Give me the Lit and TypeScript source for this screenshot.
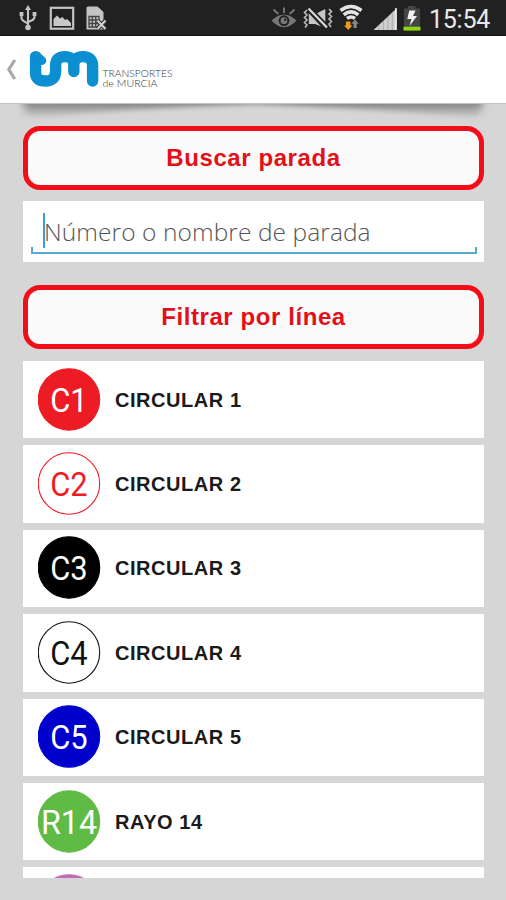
import { LitElement, html, css, svg } from "lit";
import { customElement, property } from "lit/decorators.js";

interface Line {
  code: string;
  name: string;
  fill: string;
  ink: string;
  ring: string;
}

const LINES: Line[] = [
  { code: "C1", name: "CIRCULAR 1", fill: "#ed1c24", ink: "#fff", ring: "#ed1c24" },
  { code: "C2", name: "CIRCULAR 2", fill: "#fff", ink: "#ed1c24", ring: "#ed1c24" },
  { code: "C3", name: "CIRCULAR 3", fill: "#000", ink: "#fff", ring: "#000" },
  { code: "C4", name: "CIRCULAR 4", fill: "#fff", ink: "#111", ring: "#111" },
  { code: "C5", name: "CIRCULAR 5", fill: "#0000cd", ink: "#fff", ring: "#0000cd" },
  { code: "R14", name: "RAYO 14", fill: "#5fbb46", ink: "#fff", ring: "#5fbb46" },
  { code: "", name: "", fill: "#c06fb4", ink: "#fff", ring: "#c06fb4" },
];

@customElement("status-bar")
export class StatusBar extends LitElement {
  static styles = css`
    :host { display: flex; justify-content: space-between; height: 36px; box-sizing: border-box;
      background: #212121; border-bottom: 1px solid #111; }
    svg { display: block; }
    .right { display: flex; }
    .clock { font: 400 25px/39px Roboto, sans-serif; color: #e9e9e9; width: 77px; height: 35px;
      letter-spacing: -0.250px; }
  `;
  render() {
    return html`
      <svg width="120" height="35" viewBox="0 0 120 35">
        <g stroke="#c4c4c4" fill="none" stroke-width="2.100">
          <path d="M28 9V27M21.500 13V18Q21.500 20.500 28 23.500M34.500 13V17Q34.500 20 28 22" />
        </g>
        <path d="M28 5L31 10H25ZM19.600 12H23.400V16H19.600ZM32.600 12H36.400V16H32.600Z" fill="#c4c4c4" />
        <circle cx="28" cy="27.500" r="2.800" fill="#c4c4c4" />
        <rect x="50.800" y="7.800" width="22.400" height="20.900" fill="none" stroke="#c4c4c4" stroke-width="2.200" />
        <path d="M53.500 26V19L57 15.500L60 18.500L62.500 17L65 20L67 19L71 23V26Z" fill="#c8c8c8" />
        <path d="M88 6.500H97.500L103.500 12V29.500H86.500V8Q86.500 6.500 88 6.500Z" fill="#c4c4c4" />
        <path d="M89 16.500H99V27H89ZM89 20H99M89 23.500H99M92.300 16.500V27M95.700 16.500V27" fill="none" stroke="#444" stroke-width="1.300" />
        <path d="M97.500 20.500L105.500 29M105.500 20.500L97.500 29" stroke="#333" stroke-width="4.200" />
        <path d="M97.500 20.500L105.500 29M105.500 20.500L97.500 29" stroke="#d2d2d2" stroke-width="2" />
      </svg>
      <div class="right">
        <svg width="159" height="35" viewBox="270 0 159 35">
          <path d="M271.500 20.500Q284 8.500 296.500 20.500Q284 34 271.500 20.500Z" fill="#777" />
          <path d="M284 13V7.500M278.500 14L273.500 9.500M289.500 14L294.500 9.500" stroke="#777" stroke-width="1.900" />
          <circle cx="284" cy="20.700" r="4.400" fill="none" stroke="#212121" stroke-width="2" />
          <circle cx="285.200" cy="19.800" r="1.200" fill="#212121" />
          <path d="M308.800 11.500V24H315L325.300 28V9L316.500 13.500Z" fill="#c6c6c6" />
          <path d="M310 8L328 26.500M307 9L324.500 28" stroke="#212121" stroke-width="3" />
          <path d="M308.500 8.500L327 27.500" stroke="#d8d8d8" stroke-width="2.200" />
          <path d="M307 10L304.500 12.500L307 15L304.500 17.500L307 20L304.500 22.500L307 25L305 27.500M329 9L331.500 11.500L329 14L331.500 16.500L329 19L331.500 21.500L329 24L331 27" fill="none" stroke="#bdbdbd" stroke-width="1.600" />
          <g fill="none" stroke="#e4e4e4" stroke-width="3.500">
            <path d="M340.500 10.500Q351 2.500 361.500 10.500" />
            <path d="M343.700 14.800Q351 9 358.300 14.800" />
            <path d="M347 18.500Q351 15.500 355 18.500" />
          </g>
          <path d="M346 21.500H350.500V25.500H352.500L348.200 30L344 25.500H346Z" fill="#f09a24" />
          <path d="M353.500 28V23.800H351.300L355 19.500L358.700 23.800H356.700V28Z" fill="#888" />
          <path d="M373.500 30L396.500 8.500V30Z" fill="#cfcfcf" />
          <path d="M379 25V30M383.500 21V30M388 17V30M392.300 13V30" stroke="#a8a8a8" stroke-width="0.900" />
          <path d="M396 8V30" stroke="#eee" stroke-width="1.600" />
          <path d="M404 8.500H408V6H415.500V8.500H420V27H404Z" fill="#454545" />
          <rect x="403.500" y="26.700" width="17" height="3.900" fill="#90d510" />
          <path d="M409.300 10.500H415.500L413 16H417L409.500 26L411.500 19H407.300Z" fill="#f2f2f2" />
        </svg>
        <div class="clock">15:54</div>
      </div>
    `;
  }
}

@customElement("brand-header")
export class BrandHeader extends LitElement {
  static styles = css`
    :host { display: block; height: 67px; background: #fff; }
    svg { display: block; }
    text { font-family: Lato, sans-serif; font-weight: 300; fill: #333; }
  `;
  render() {
    return html`<svg width="506" height="67" viewBox="0 36 506 67">
      <path d="M14.800 60L8.800 69.500L14.800 79" fill="none" stroke="#a8a8a8" stroke-width="3.200" />
      <g fill="none" stroke="#0b8fd0" stroke-linecap="round" stroke-linejoin="round">
        <path stroke-width="11.400" d="M35.600 56.600V73Q35.600 81 45.500 81Q55.600 81 55.600 71V65.500Q55.600 56.600 64.800 56.600Q73.500 56.600 73.800 65V71.500V65Q74 56.600 83 56.600Q92.600 56.600 92.600 66V81" />
        <path stroke-width="8.500" d="M37 56L42 60.700" />
      </g>
      <text x="102.500" y="76.600" font-size="10.500" textLength="70" lengthAdjust="spacingAndGlyphs">TRANSPORTES</text>
      <text x="102.500" y="87" font-size="10.500" textLength="55" lengthAdjust="spacingAndGlyphs">de MURCIA</text>
    </svg>`;
  }
}

@customElement("line-row")
export class LineRow extends LitElement {
  @property({ attribute: false }) line!: Line;
  static styles = css`
    :host { display: flex; align-items: center; gap: 14px; height: 77.400px; flex: none; padding-left: 15px;
      box-sizing: border-box; background: #fff; }
    svg { display: block; flex: none; }
    .code { font: 400 32.500px Roboto, sans-serif; }
    .name { font: 700 20px/24px "Liberation Sans", sans-serif; letter-spacing: 0.550px; color: #1a1a1a; }
  `;
  render() {
    const l = this.line;
    const width = l.code.length === 3 ? 56 : 37.5;
    return html`
      <svg width="63" height="64" viewBox="0 0 63 64">
        <circle cx="31" cy="31.500" r="30.700" fill=${l.fill} stroke=${l.ring} stroke-width="1.100" />
        ${l.code
          ? svg`<text class="code" x="31" y="44.200" text-anchor="middle" textLength=${width}
              lengthAdjust="spacingAndGlyphs" fill=${l.ink}>${l.code}</text>`
          : null}
      </svg>
      <div class="name">${l.name}</div>
    `;
  }
}

@customElement("app-root")
export class AppRoot extends LitElement {
  static styles = css`
    :host { display: flex; flex-direction: column; height: 900px; overflow: hidden; background: #d6d6d6; }
    .shade { display: block; flex: none; height: 23px; }
    .body { display: flex; flex-direction: column; padding: 0 22px 0 23px; }
    .title { box-sizing: border-box; height: 64px; border: 5px solid #f20d18; border-radius: 17px;
      background: #fafafa; color: #e31019; text-align: center; letter-spacing: 0.580px;
      font: 700 24px/53px "Liberation Sans", sans-serif; }
    .field { box-sizing: border-box; height: 61px; margin: 11.400px 0 23.100px; padding: 12px 7px 7px;
      background: #fff; display: flex; flex-direction: column; }
    .entry { display: flex; align-items: center; height: 35px; padding-left: 12.500px; }
    .caret { width: 2px; height: 35px; background: #3a9be0; flex: none; }
    .hint { font: 300 24.500px/38px "Open Sans", "Noto Sans", sans-serif; color: #555; white-space: nowrap;
      letter-spacing: 0.080px; padding-top: 2px; margin-left: -0.500px; }
    .underline { height: 7px; margin: -1px 0 0 1px; box-sizing: border-box; border: 2px solid #58abd0; border-top: 0; }
    .list { display: flex; flex-direction: column; gap: 7px; margin-top: 11.500px; height: 517px; overflow: hidden; }
  `;
  render() {
    return html`
      <status-bar></status-bar>
      <brand-header></brand-header>
      <svg class="shade" width="506" height="23" viewBox="0 0 506 23">
        <defs>
          <filter id="soft" x="-10%" y="-60%" width="120%" height="250%"><feGaussianBlur stdDeviation="4 2.500" /></filter>
          <linearGradient id="fade" gradientUnits="userSpaceOnUse" x1="0" y1="0" x2="0" y2="15">
            <stop offset="0" stop-color="#808080" /><stop offset="0.500" stop-color="#acacac" />
            <stop offset="1" stop-color="#d0d0d0" />
          </linearGradient>
        </defs>
        <path d="M23 -3H483L480 15Q380 6 253 1Q126 6 26 15Z" fill="url(#fade)" filter="url(#soft)" />
        <path d="M0 0.500H506" stroke="#c2c2c2" />
      </svg>
      <div class="body">
        <div class="title">Buscar parada</div>
        <div class="field">
          <div class="entry"><span class="caret"></span><span class="hint">Número o nombre de parada</span></div>
          <div class="underline"></div>
        </div>
        <div class="title">Filtrar por línea</div>
        <div class="list">${LINES.map((l) => html`<line-row .line=${l}></line-row>`)}</div>
      </div>
    `;
  }
}
